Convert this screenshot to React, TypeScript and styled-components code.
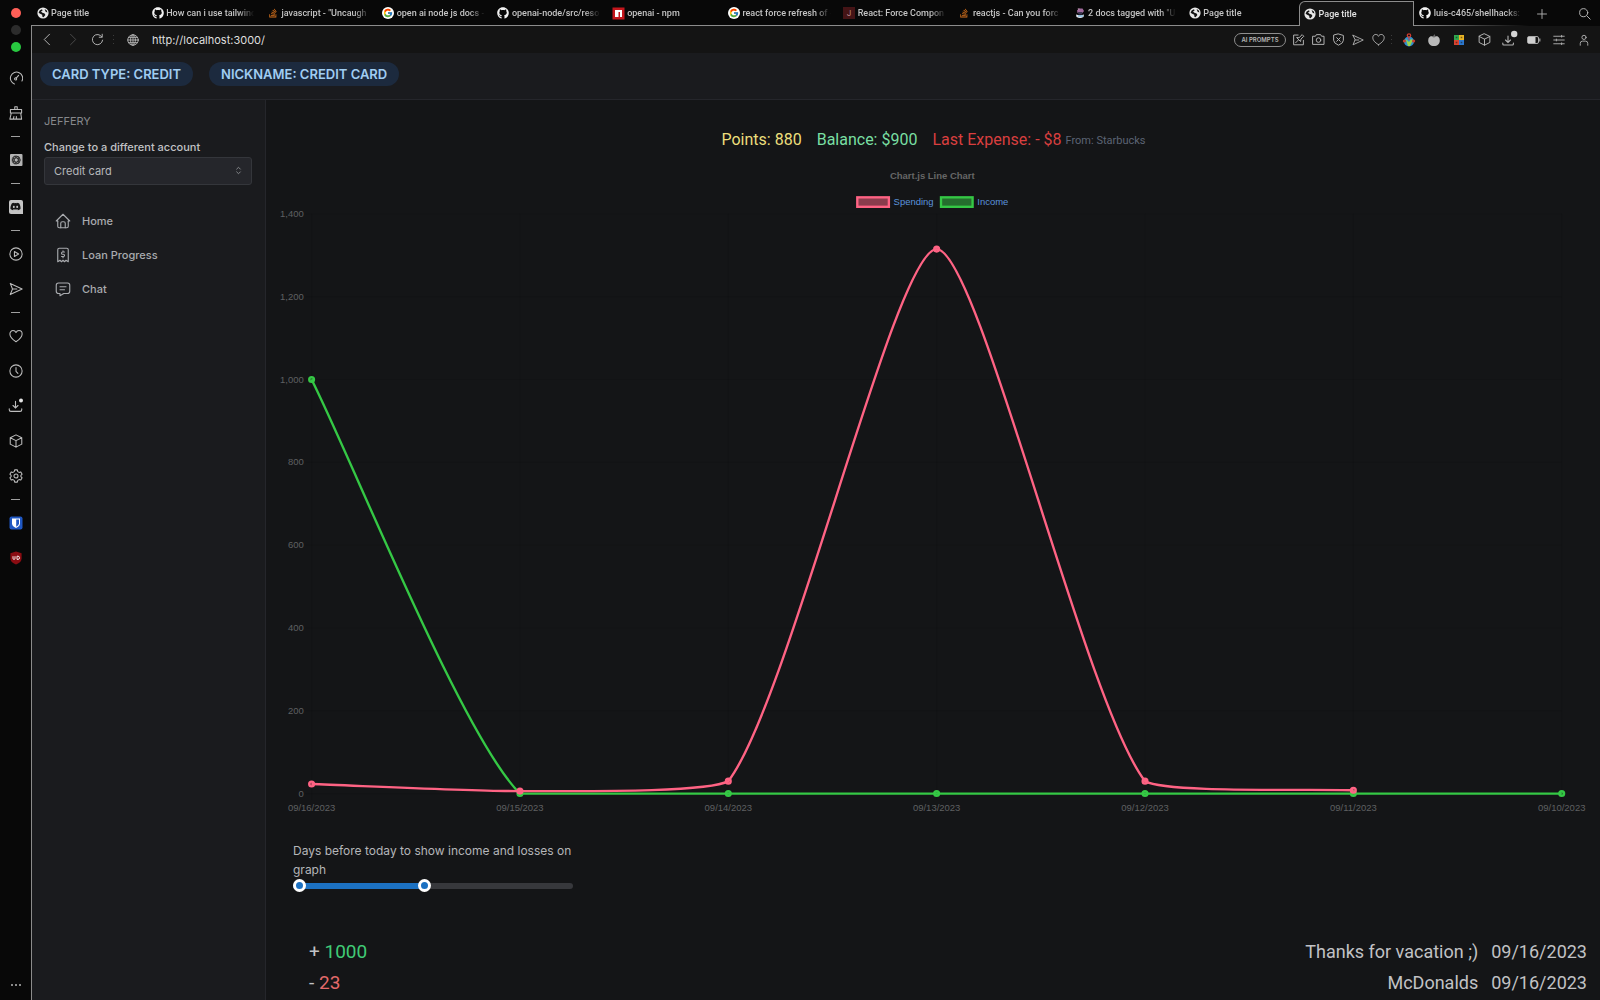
import React, { useState } from "react";
import styled, { createGlobalStyle, css } from "styled-components";
import { FaGithub, FaStackOverflow, FaDiscord } from "react-icons/fa";
import { FcGoogle } from "react-icons/fc";
import { TbHome, TbReceipt2, TbMessage, TbSelector } from "react-icons/tb";

const ui = `Inter, "Liberation Sans", sans-serif`;
const display = `Roboto, "Liberation Sans", sans-serif`;
const frameLine = "#8c8c8c";

const GlobalStyle = createGlobalStyle`
  * { box-sizing: border-box; }
  body { margin: 0; background: #141517; font-family: ${ui}; color: #c1c2c5; }
  button, input, select { font-family: inherit; margin: 0; }
  button { background: none; border: 0; padding: 0; color: inherit; cursor: pointer; }
  svg { display: block; }
`;

/* ---------- browser frame ---------- */

const Browser = styled.div`
  display: grid;
  grid-template-columns: 31px minmax(0, 1fr);
  height: 100vh;
  overflow: hidden;
  background: #080808;
`;

const Rail = styled.aside`
  display: flex;
  flex-direction: column;
  align-items: center;
  padding: 8px 0;
`;

const Lights = styled.div`
  display: flex;
  flex-direction: column;
  gap: 7px;
  margin-bottom: 8px;
`;

const Light = styled.button<{ $color: string }>`
  width: 10px;
  height: 10px;
  border-radius: 50%;
  background: ${(p) => p.$color};
`;

const RailButton = styled.button`
  display: grid;
  place-items: center;
  flex: none;
  width: 30px;
  height: 35px;
  color: #bdbdbd;
`;

const RailDash = styled.hr`
  flex: none;
  width: 9px;
  height: 1px;
  margin: 6px 0 5px;
  border: 0;
  background: #a0a0a0;
`;

const RailFoot = styled.div`
  margin-top: auto;
`;

const Frame = styled.div`
  display: flex;
  flex-direction: column;
  min-width: 0;
  min-height: 0;
`;

const TabBar = styled.div`
  display: flex;
  height: 26px;
  flex: none;
`;

const Tabs = styled.div`
  display: flex;
  flex: 1;
  min-width: 0;
`;

const Tab = styled.button<{ $state: "idle" | "active" | "last" }>`
  display: flex;
  align-items: center;
  gap: 2px;
  flex: 1 1 0;
  min-width: 0;
  padding: 0 5px;
  color: #c4c4c4;
  ${(p) =>
    p.$state === "idle" &&
    css`
      border-bottom: 1px solid ${frameLine};
      padding-top: 1px;
    `}
  ${(p) =>
    p.$state === "last" &&
    css`
      background: linear-gradient(90deg, ${frameLine}, #080808) bottom / 100% 1px no-repeat;
    `}
  ${(p) =>
    p.$state === "active" &&
    css`
      margin-top: 1px;
      background: #141414;
      border: 1px solid ${frameLine};
      border-bottom: 0;
      border-top-left-radius: 6px;
      padding: 0 4px;
      color: #e4e4e4;
    `}
`;

const TabIcon = styled.span`
  display: grid;
  place-items: center;
  flex: none;
  width: 13px;
  height: 13px;
`;

const TabText = styled.span`
  flex: 1;
  min-width: 0;
  overflow: hidden;
  white-space: nowrap;
  text-align: left;
  font-family: ${display};
  font-size: 9px;
  line-height: 14px;
  font-weight: 500;
  mask-image: linear-gradient(90deg, #000 80%, transparent 98%);
`;

const TabTools = styled.div`
  display: flex;
  align-items: center;
  justify-content: space-between;
  width: 71px;
  padding: 1px 9px 0 6px;
  color: #a8a8a8;
`;

const Page = styled.div`
  display: flex;
  flex-direction: column;
  flex: 1;
  min-height: 0;
  border-left: 1px solid ${frameLine};
  background: #141517;
`;

const AddressBar = styled.div`
  display: flex;
  align-items: center;
  flex: none;
  height: 27px;
  padding: 0 9px 0 8px;
  background: #141414;
  color: #b4b4b4;
`;

const NavButtons = styled.div`
  display: flex;
  align-items: center;
  gap: 11px;
`;

const IconButton = styled.button<{ $dim?: boolean }>`
  display: grid;
  place-items: center;
  width: 14px;
  height: 14px;
  color: ${(p) => (p.$dim ? "#4a4a4a" : "#b4b4b4")};
`;

const Grip = styled.span`
  width: 1px;
  height: 9px;
  background: repeating-linear-gradient(#3c3c3c 0 1px, transparent 1px 4px);
`;

const AddressGrip = styled(Grip)`
  margin: 0 13px 0 9px;
`;

const Address = styled.input`
  flex: 1;
  min-width: 0;
  margin-left: 13px;
  padding: 0;
  border: 0;
  outline: 0;
  background: none;
  color: #dedede;
  font-size: 11px;
  line-height: 16px;
`;

const Prompts = styled.button`
  height: 14px;
  width: 52px;
  margin-right: 5px;
  border: 1px solid #8e8e8e;
  border-radius: 7px;
  font-size: 6px;
  line-height: 12px;
  font-weight: 600;
`;

const PageTools = styled.div`
  display: flex;
  align-items: center;
  gap: 6px;
`;

const Extensions = styled.div`
  display: flex;
  align-items: center;
  gap: 11px;
  margin-left: 10px;
`;

/* ---------- app ---------- */

const AppHeader = styled.header`
  display: flex;
  gap: 16px;
  flex: none;
  height: 47px;
  padding: 9px 8px;
  background: #1a1b1e;
  border-bottom: 1px solid #25262b;
`;

const Badge = styled.span`
  height: 24px;
  padding: 0 12px;
  border-radius: 12px;
  background: #1c2a3e;
  color: #a0cdf2;
  font-size: 13px;
  line-height: 24px;
  font-weight: 600;
  text-transform: uppercase;
  white-space: nowrap;
`;

const Body = styled.div`
  display: flex;
  flex: 1;
  min-height: 0;
`;

const Sidebar = styled.nav`
  flex: none;
  width: 234px;
  padding: 12px 12px;
  background: #1a1b1e;
  border-right: 1px solid #25262b;
`;

const UserName = styled.p`
  margin: 0;
  color: #86888c;
  font-size: 11px;
  line-height: 18px;
`;

const FieldLabel = styled.label`
  display: block;
  margin-top: 8px;
  color: #c1c2c5;
  font-size: 11px;
  line-height: 18px;
  font-weight: 500;
`;

const SelectWrap = styled.div`
  position: relative;
  width: 208px;
  margin-top: 1px;
`;

const Select = styled.select`
  display: block;
  width: 100%;
  height: 28px;
  padding: 0 9px;
  appearance: none;
  border: 1px solid #34363b;
  border-radius: 3px;
  background: #25262b;
  color: #b6b7ba;
  font-size: 11px;
`;

const SelectIcon = styled.span`
  position: absolute;
  top: 8px;
  right: 8px;
  color: #8b8d91;
  pointer-events: none;
`;

const NavList = styled.ul`
  list-style: none;
  margin: 19px 0 0;
  padding: 0;
`;

const NavLink = styled.a`
  display: flex;
  align-items: center;
  gap: 10px;
  height: 34px;
  padding: 0 10px;
  color: #a9abaf;
  font-size: 11px;
  font-weight: 500;
  text-decoration: none;
`;

const Main = styled.main`
  flex: 1;
  min-width: 0;
  padding: 30px 13px 0 14px;
  overflow: hidden;
  background: #141517;
`;

const Stats = styled.div`
  display: flex;
  justify-content: center;
  align-items: center;
  gap: 15px;
  height: 20px;
  font-family: ${display};
`;

const Stat = styled.span<{ $color: string }>`
  color: ${(p) => p.$color};
  font-size: 16px;
  line-height: 20px;
  white-space: nowrap;
`;

const Source = styled.small`
  color: #5c6474;
  font-size: 11px;
  margin-left: 4px;
  vertical-align: 1px;
`;

const ChartBox = styled.figure`
  margin: 11px 0 0;

  svg {
    width: 100%;
    height: auto;
  }
  text {
    font-family: "Liberation Sans", sans-serif;
    font-size: 12px;
    fill: #5f6062;
  }
  text.title {
    font-weight: 700;
    fill: #666666;
  }
  text.legend {
    fill: #5b93dc;
  }
`;

const RangeField = styled.fieldset`
  width: 280px;
  margin: 26px 0 0 13px;
  padding: 0;
  border: 0;
`;

const RangeLegend = styled.legend`
  padding: 0;
  color: #b5b6b9;
  font-size: 12px;
  line-height: 19px;
`;

const RangeTrack = styled.div`
  position: relative;
  height: 13px;
  padding: 4px 0 3px;
`;

const RangeRail = styled.div`
  height: 6px;
  border-radius: 3px;
  background: #37383c;
`;

const RangeFill = styled.div`
  position: absolute;
  top: 4px;
  height: 6px;
  border-radius: 3px;
  background: #1c71c2;
`;

const RangeInput = styled.input`
  position: absolute;
  inset: 0;
  width: 100%;
  height: 13px;
  margin: 0;
  appearance: none;
  background: none;
  pointer-events: none;

  &::-webkit-slider-thumb {
    appearance: none;
    width: 13px;
    height: 13px;
    border: 3px solid #fff;
    border-radius: 50%;
    background: #1c71c2;
    pointer-events: auto;
  }
`;

const Transactions = styled.ul`
  list-style: none;
  margin: 44px 0 0;
  padding: 0 0 0 29px;
`;

const Transaction = styled.li`
  display: flex;
  gap: 13px;
  font-family: ${display};
  font-size: 18px;
  line-height: 31px;
  white-space: nowrap;
`;

const Amount = styled.span<{ $color: string }>`
  color: ${(p) => p.$color};
`;

const Signed = styled.span`
  flex: 1;
  font-size: 19px;
`;

/* ---------- icons ---------- */

type IconProps = { size?: number; children?: React.ReactNode; stroke?: number };

const Line = ({ size = 14, stroke = 1.2, children }: IconProps) => (
  <svg width={size} height={size} viewBox="0 0 16 16" fill="none" stroke="currentColor" strokeWidth={stroke} strokeLinejoin="round" strokeLinecap="round">
    {children}
  </svg>
);

const Gauge = () => (
  <Line>
    <path d="M6.200 14.800A7 7 0 1 1 14.800 11.500M8.200 8.200 11 5" />
    <circle cx="7.600" cy="9" r="1.200" />
  </Line>
);
const Cleaner = () => (
  <Line>
    <path d="M6.600 4V.8h2.800V4M1.600 4h12.800v4H1.600zM2.600 8 1 15h13.400L13.400 8M5 15l.6-3M8.400 15v-3" />
  </Line>
);
const Plane = ({ size }: IconProps) => (
  <Line size={size}>
    <path d="M1.400 1.600 15 8 1.400 14.400 4 8zM4 8h5" />
  </Line>
);
const Heart = ({ size }: IconProps) => (
  <Line size={size}>
    <path d="M8 14.500C3.500 11.600 1 9 1 5.700 1 3.400 2.600 1.800 4.600 1.800 6.200 1.800 7.400 2.700 8 4.100 8.600 2.700 9.800 1.800 11.400 1.800 13.400 1.800 15 3.400 15 5.700 15 9 12.500 11.600 8 14.500z" />
  </Line>
);
const Clock = () => (
  <Line>
    <circle cx="8" cy="8" r="7" />
    <path d="M8 4v4.400l2.200 2.400" />
  </Line>
);
const Play = () => (
  <Line>
    <circle cx="8" cy="8" r="7" />
    <path d="M6.200 5.200 11 8l-4.800 2.800z" />
  </Line>
);
const Download = ({ size = 15 }: IconProps) => (
  <svg width={size} height={size} viewBox="0 0 18 18" fill="none" stroke="currentColor" strokeWidth="1.300" strokeLinecap="round">
    <path d="M9 4v8M6 9l3 3 3-3M1.500 13v1q0 2 2 2h11q2 0 2-2v-1" />
    <circle cx="15.600" cy="3" r="2.400" fill="#e4e4e4" stroke="none" />
  </svg>
);
const DownloadDone = () => (
  <svg width="14" height="14" viewBox="0 0 14 14" fill="none" stroke="currentColor" strokeWidth="1.100" strokeLinecap="round" overflow="visible">
    <path d="M6 3v6.500M3.500 7 6 9.500 8.500 7M.8 10v1q0 1 1 1h8.600q1 0 1-1v-1" />
    <circle cx="12.200" cy="1" r="3.200" fill="#d4d4d4" stroke="none" />
  </svg>
);
const Cube = ({ size }: IconProps) => (
  <Line size={size}>
    <path d="M8 1 14.600 4.200v7.400L8 15 1.400 11.600V4.200zM1.400 4.200 8 7.600l6.600-3.400M8 7.600V15" />
  </Line>
);
const Gear = () => (
  <Line>
    <path d="M6.500 1h3l.5 2 1.500.9 2-.6L15 5.900 13.600 7.300v1.400L15 10.100l-1.500 2.600-2-.6-1.500.9-.5 2h-3L6 13l-1.500-.9-2 .6L1 10.100l1.400-1.400V7.300L1 5.900l1.500-2.600 2 .6L6 3z" />
    <circle cx="8" cy="8" r="2.300" />
  </Line>
);
const ChatGpt = () => (
  <svg width="14" height="14" viewBox="0 0 14 14">
    <rect x="1" y="1" width="12.500" height="12" rx="1" fill="#b4b4b4" />
    <g fill="none" stroke="#2a2a2a" strokeWidth="0.800">
      <circle cx="7.200" cy="7" r="4" />
      <ellipse cx="7.200" cy="7" rx="4" ry="2" />
      <ellipse cx="7.200" cy="7" rx="4" ry="2" transform="rotate(60 7.200 7)" />
      <ellipse cx="7.200" cy="7" rx="4" ry="2" transform="rotate(120 7.200 7)" />
    </g>
  </svg>
);
const DiscordTile = styled.span`
  display: grid;
  place-items: center;
  width: 14px;
  height: 14px;
  border-radius: 2px 2px 0 2px;
  background: #c4c4c4;
  color: #141414;
`;
const Bitwarden = () => (
  <svg width="14" height="14" viewBox="0 0 14 14">
    <rect x=".5" y=".5" width="13" height="13" rx="2" fill="#1f57c2" />
    <path d="M3 2.500h8v5q0 2.500-4 4.500-4-2-4-4.500z" fill="#fff" />
    <path d="M7.200 3.500h2.800v4q0 1.800-2.800 3.200z" fill="#1f57c2" />
  </svg>
);
const UBlock = () => (
  <svg width="14" height="14" viewBox="0 0 14 14">
    <path d="M7 .5 12.600 2.300v5.200q0 3.800-5.600 6-5.600-2.200-5.600-6V2.300z" fill="#8a0c12" />
    <path d="M4 5.200v2.200q0 1 1 1t1-1V5.200M8 5.200h1q1.500 0 1.500 1.600T9 8.400H8z" fill="none" stroke="#fff" strokeWidth=".900" />
  </svg>
);
const Globe = () => (
  <Line size={12}>
    <circle cx="8" cy="8" r="7" />
    <ellipse cx="8" cy="8" rx="3.200" ry="7" />
    <path d="M1 8h14M2 4.500h12M2 11.500h12M8 1v14" />
  </Line>
);
const PageIcon = () => (
  <svg width="12" height="12" viewBox="0 0 12 12">
    <circle cx="6" cy="6" r="5.600" fill="#e8e8e8" />
    <path d="M1.600 5.800Q2 3 5 2.200L5.600 3.600 4 4.600 5.400 5.800 7.600 6.400 8.400 8 6.600 10.200 5.400 9.800 5.200 7.800 3.200 6.800z" fill="#141414" />
    <path d="M7.600 2 9.800 3.400 10.400 5.400 8.600 4.800z" fill="#141414" />
  </svg>
);
const Docusaurus = () => (
  <svg width="12" height="12" viewBox="0 0 12 12">
    <path d="M3 3.500 5 1.500h3.500L10 4 8.500 6H3.500z" fill="#a06a9c" />
    <path d="M3.500 1.500h2L5 3z" fill="#d9a8c8" />
    <path d="M4 5h4.500L8 7.500H4.500z" fill="#3d3550" />
    <path d="M2 7.500q4 1.500 8 0L9.500 10q-3.500 2-7 0z" fill="#e6eaf2" />
    <path d="M4 9h5" stroke="#58a6d8" />
  </svg>
);
const JTile = styled.span`
  width: 12px;
  height: 12px;
  background: #451416;
  color: #b98686;
  font-size: 8px;
  line-height: 12px;
  text-align: center;
`;
const NpmTile = () => (
  <svg width="13" height="13" viewBox="0 0 13 13">
    <rect x=".5" y=".5" width="12" height="12" fill="#c4161c" />
    <path d="M3 3h7v7H8V5H6.500v5H3z" fill="#fff" />
  </svg>
);
const Disc = styled.span`
  display: grid;
  place-items: center;
  width: 12px;
  height: 12px;
  border-radius: 50%;
  background: #fff;
  color: #0b0b0b;
`;
const Github = () => <FaGithub size={12} color="#f2f2f2" />;
const Google = () => (
  <Disc>
    <FcGoogle size={10} />
  </Disc>
);
const Overflow = () => <FaStackOverflow size={10} color="#d9731c" />;

const ColorMap = () => (
  <svg width="14" height="14" viewBox="0 0 14 14">
    <circle cx="7" cy="8.500" r="5" fill="#2f8fd0" />
    <path d="M3.500 5.500 7 9l2-3 2 1-3 6H6z" fill="#9bd14a" />
    <circle cx="2.400" cy="8" r="1.600" fill="#c8402e" />
    <circle cx="11.600" cy="8" r="1.600" fill="#c8402e" />
    <circle cx="7" cy="2.500" r="1.700" fill="none" stroke="#d23a2c" strokeWidth="1.200" />
    <path d="M7 4v3" stroke="#d23a2c" />
  </svg>
);
const Tomato = () => (
  <svg width="14" height="14" viewBox="0 0 14 14">
    <path d="M7 3.500C10 2.300 12.800 4 12.800 7.500S10.500 13 7 13 1.200 11 1.200 7.500 4 2.300 7 3.500z" fill="#b9b9b9" />
    <path d="M4 3.500 7 4.500l3-1.200L8 2.800 7.500 1 6.500 2.700z" fill="#6c6c6c" />
  </svg>
);
const Squares = () => (
  <svg width="14" height="14" viewBox="0 0 14 14">
    <path d="M2 2h5v5H2z" fill="#2fa84f" />
    <path d="M7 2h5v5H7z" fill="#e8b324" />
    <path d="M2 7h5v5H2z" fill="#d8432f" />
    <path d="M7 7h5v5H7z" fill="#2c78d0" />
    <path d="M3.700 3.700h1.600v1.600H3.700zM8.700 3.700h1.600v1.600H8.700zM3.700 8.700h1.600v1.600H3.700zM8.700 8.700h1.600v1.600H8.700z" fill="#141414" opacity=".55" />
  </svg>
);
const Battery = () => (
  <svg width="14" height="14" viewBox="0 0 14 14">
    <rect x=".5" y="3.500" width="11" height="7" rx="1.500" fill="none" stroke="#a8a8a8" />
    <rect x="1" y="4" width="7.500" height="6" fill="#d0d0d0" />
    <path d="M12.800 5.500v3" stroke="#a8a8a8" strokeWidth="1.200" />
  </svg>
);
const Sliders = () => (
  <Line size={12}>
    <path d="M1 3h14M1 8h14M1 13h14M11.500 1.800v2.400M4.500 6.800v2.400M11.500 11.800v2.400" />
  </Line>
);
const Person = () => (
  <Line size={12}>
    <circle cx="8" cy="4.500" r="2.800" />
    <path d="M3 15V12.500q0-3 3-3h4q3 0 3 3V15" />
  </Line>
);
const Note = () => (
  <Line size={13}>
    <path d="M7.500 2.500H2v12h12V9M4.500 12 7.500 9M6 6l4.500 4.500.5-3L14.500 4 12.500 2 9 5.500z" />
  </Line>
);
const Camera = () => (
  <Line size={13}>
    <path d="M1.200 4h3l1.200-2h5.200l1.200 2h3v10H1.200z" />
    <circle cx="8" cy="8.700" r="2.800" />
  </Line>
);
const Shield = () => (
  <Line size={13}>
    <path d="M8 1.200 14 3v6q0 3.500-6 6-6-2.500-6-6V3zM5.800 5.800l4.400 4.400M10.200 5.800 5.800 10.200" />
  </Line>
);

/* ---------- data ---------- */

const tabs: { title: string; icon: React.ReactNode }[] = [
  { title: "Page title", icon: <PageIcon /> },
  { title: "How can i use tailwind", icon: <Github /> },
  { title: "javascript - \"Uncaugh", icon: <Overflow /> },
  { title: "open ai node js docs -", icon: <Google /> },
  { title: "openai-node/src/reso", icon: <Github /> },
  { title: "openai - npm", icon: <NpmTile /> },
  { title: "react force refresh of -", icon: <Google /> },
  { title: "React: Force Compon", icon: <JTile>J</JTile> },
  { title: "reactjs - Can you forc", icon: <Overflow /> },
  { title: "2 docs tagged with \"U", icon: <Docusaurus /> },
  { title: "Page title", icon: <PageIcon /> },
  { title: "Page title", icon: <PageIcon /> },
  { title: "luis-c465/shellhacks:", icon: <Github /> },
];
const activeTab = 11;

const days = ["09/16/2023", "09/15/2023", "09/14/2023", "09/13/2023", "09/12/2023", "09/11/2023", "09/10/2023"];
const spending = [23, 6, 30, 1315, 30, 8];
const income = [1000, 0, 0, 0, 0, 0, 0];
const ticks = [0, 200, 400, 600, 800, 1000, 1200, 1400];

const transactions = [
  { sign: "+", amount: "1000", color: "#40cb76", note: "Thanks for vacation ;)", date: "09/16/2023" },
  { sign: "-", amount: "23", color: "#e36a6a", note: "McDonalds", date: "09/16/2023" },
];

/* ---------- chart ---------- */

const plot = { left: 40, right: 1623, top: 67, bottom: 801 };
const px = (i: number) => plot.left + (i * (plot.right - plot.left)) / (days.length - 1);
const py = (v: number) => plot.bottom - (v * (plot.bottom - plot.top)) / 1400;
const clampY = (y: number) => Math.min(plot.bottom, Math.max(plot.top, y));

type Pt = { x: number; y: number };

function smoothPath(values: number[], tension = 0.2) {
  const pts: Pt[] = values.map((v, i) => ({ x: px(i), y: py(v) }));
  const controls = pts.map((p, i) => {
    const a = pts[i - 1] ?? p;
    const b = pts[i + 1] ?? p;
    const before = Math.hypot(p.x - a.x, p.y - a.y);
    const after = Math.hypot(b.x - p.x, b.y - p.y);
    const fa = (tension * before) / (before + after);
    const fb = (tension * after) / (before + after);
    return {
      prev: { x: p.x - fa * (b.x - a.x), y: clampY(p.y - fa * (b.y - a.y)) },
      next: { x: p.x + fb * (b.x - a.x), y: clampY(p.y + fb * (b.y - a.y)) },
    };
  });
  return pts
    .map((p, i) =>
      i === 0
        ? `M${p.x} ${p.y}`
        : `C${controls[i - 1].next.x} ${controls[i - 1].next.y} ${controls[i].prev.x} ${controls[i].prev.y} ${p.x} ${p.y}`
    )
    .join("");
}

const Series = ({ values, color, fill }: { values: number[]; color: string; fill: string }) => (
  <g>
    <path d={smoothPath(values)} fill="none" stroke={color} strokeWidth="3" />
    {values.map((v, i) => (
      <circle key={i} cx={px(i)} cy={py(v)} r="3" fill={fill} stroke={color} strokeWidth="3" />
    ))}
  </g>
);

const pink = "rgb(255, 99, 132)";
const pinkFill = "rgba(255, 99, 132, 0.5)";
const green = "rgb(53, 200, 69)";
const greenFill = "rgba(53, 200, 69, 0.5)";

const LineChart = () => (
  <ChartBox>
    <svg viewBox="0 0 1655 828" role="img" aria-label="Chart.js Line Chart">
      <text className="title" x="826" y="23" textAnchor="middle">Chart.js Line Chart</text>
      <rect x="731" y="46" width="40" height="12" fill={pinkFill} stroke={pink} strokeWidth="3" />
      <text className="legend" x="777" y="56">Spending</text>
      <rect x="837" y="46" width="40" height="12" fill={greenFill} stroke={green} strokeWidth="3" />
      <text className="legend" x="883" y="56">Income</text>
      {ticks.map((t) => (
        <g key={t}>
          <path d={`M${plot.left - 8} ${py(t)}H${plot.right}`} stroke="#000" strokeOpacity="0.1" />
          <text x={plot.left - 10} y={py(t) + 4} textAnchor="end">{t.toLocaleString("en-US")}</text>
        </g>
      ))}
      {days.map((d, i) => (
        <g key={d}>
          <path d={`M${px(i)} ${plot.top}V${plot.bottom + 8}`} stroke="#000" strokeOpacity="0.1" />
          <text x={px(i)} y="823" textAnchor="middle">{d}</text>
        </g>
      ))}
      <Series values={income} color={green} fill={greenFill} />
      <Series values={spending} color={pink} fill={pinkFill} />
    </svg>
  </ChartBox>
);

const DaysRange = () => {
  const max = 15;
  const [from, setFrom] = useState(0);
  const [to, setTo] = useState(7);
  return (
    <RangeField>
      <RangeLegend>Days before today to show income and losses on graph</RangeLegend>
      <RangeTrack>
        <RangeRail />
        <RangeFill style={{ left: `${(from / max) * 100}%`, width: `${((to - from) / max) * 100}%` }} />
        <RangeInput type="range" aria-label="From day" min={0} max={max} value={from} onChange={(e) => setFrom(Math.min(+e.target.value, to))} />
        <RangeInput type="range" aria-label="To day" min={0} max={max} value={to} onChange={(e) => setTo(Math.max(+e.target.value, from))} />
      </RangeTrack>
    </RangeField>
  );
};

export default function App() {
  return (
    <Browser>
      <GlobalStyle />
      <Rail>
        <Lights>
          <Light $color="#ff5f57" aria-label="Close" />
          <Light $color="#2c2c2c" aria-label="Minimize" />
          <Light $color="#28c840" aria-label="Zoom" />
        </Lights>
        <RailButton aria-label="Speed"><Gauge /></RailButton>
        <RailButton aria-label="Cleaner"><Cleaner /></RailButton>
        <RailDash />
        <RailButton aria-label="ChatGPT"><ChatGpt /></RailButton>
        <RailDash />
        <RailButton aria-label="Discord"><DiscordTile><FaDiscord size={11} /></DiscordTile></RailButton>
        <RailDash />
        <RailButton aria-label="Player"><Play /></RailButton>
        <RailButton aria-label="Flow"><Plane /></RailButton>
        <RailDash />
        <RailButton aria-label="Favourites"><Heart /></RailButton>
        <RailButton aria-label="History"><Clock /></RailButton>
        <RailButton aria-label="Downloads"><Download /></RailButton>
        <RailButton aria-label="Extensions"><Cube /></RailButton>
        <RailButton aria-label="Settings"><Gear /></RailButton>
        <RailDash />
        <RailButton aria-label="Bitwarden"><Bitwarden /></RailButton>
        <RailButton aria-label="uBlock"><UBlock /></RailButton>
        <RailFoot>
          <IconButton aria-label="More">
            <svg width="12" height="4" viewBox="0 0 12 4" fill="currentColor">
              <circle cx="2" cy="2" r="1" />
              <circle cx="6" cy="2" r="1" />
              <circle cx="10" cy="2" r="1" />
            </svg>
          </IconButton>
        </RailFoot>
      </Rail>

      <Frame>
        <TabBar>
          <Tabs>
            {tabs.map((t, i) => (
              <Tab key={i} $state={i === activeTab ? "active" : i > activeTab ? "last" : "idle"}>
                <TabIcon>{t.icon}</TabIcon>
                <TabText>{t.title}</TabText>
              </Tab>
            ))}
          </Tabs>
          <TabTools>
            <IconButton aria-label="New tab"><Line size={12}><path d="M8 2v12M2 8h12" /></Line></IconButton>
            <IconButton aria-label="Search tabs"><Line size={13}><circle cx="7" cy="7" r="5" /><path d="m11 11 4 4" /></Line></IconButton>
          </TabTools>
        </TabBar>

        <Page>
          <AddressBar>
            <NavButtons>
              <IconButton aria-label="Back"><Line size={13}><path d="M10.500 1.500 4 8l6.500 6.500" /></Line></IconButton>
              <IconButton aria-label="Forward" $dim><Line size={13}><path d="M5.500 1.500 12 8l-6.500 6.500" /></Line></IconButton>
              <IconButton aria-label="Reload"><Line size={13}><path d="M13.400 4.800A6.300 6.300 0 1 0 14.300 8.800M13.800 1.500v3.700h-3.700" /></Line></IconButton>
            </NavButtons>
            <AddressGrip />
            <Globe />
            <Address aria-label="Address" defaultValue="http://localhost:3000/" />
            <Prompts>AI PROMPTS</Prompts>
            <PageTools>
              <IconButton aria-label="Note"><Note /></IconButton>
              <IconButton aria-label="Snapshot"><Camera /></IconButton>
              <IconButton aria-label="Blocker"><Shield /></IconButton>
              <IconButton aria-label="Send"><Plane size={12} /></IconButton>
              <IconButton aria-label="Favourite"><Heart size={13} /></IconButton>
              <Grip />
            </PageTools>
            <Extensions>
              <IconButton aria-label="Map"><ColorMap /></IconButton>
              <IconButton aria-label="Timer"><Tomato /></IconButton>
              <IconButton aria-label="Squares"><Squares /></IconButton>
              <IconButton aria-label="Extensions"><Cube size={13} /></IconButton>
              <IconButton aria-label="Downloads"><DownloadDone /></IconButton>
              <IconButton aria-label="Battery"><Battery /></IconButton>
              <IconButton aria-label="Easy setup"><Sliders /></IconButton>
              <IconButton aria-label="Profile"><Person /></IconButton>
            </Extensions>
          </AddressBar>

          <AppHeader>
            <Badge>Card type: Credit</Badge>
            <Badge>Nickname: Credit card</Badge>
          </AppHeader>

          <Body>
            <Sidebar>
              <UserName>JEFFERY</UserName>
              <FieldLabel htmlFor="account">Change to a different account</FieldLabel>
              <SelectWrap>
                <Select id="account" defaultValue="credit">
                  <option value="credit">Credit card</option>
                </Select>
                <SelectIcon><TbSelector size={11} /></SelectIcon>
              </SelectWrap>
              <NavList>
                <li><NavLink href="#home"><TbHome size={18} strokeWidth={1.5} />Home</NavLink></li>
                <li><NavLink href="#loans"><TbReceipt2 size={18} strokeWidth={1.5} />Loan Progress</NavLink></li>
                <li><NavLink href="#chat"><TbMessage size={18} strokeWidth={1.5} />Chat</NavLink></li>
              </NavList>
            </Sidebar>

            <Main>
              <Stats>
                <Stat $color="#ecdf7c">Points: 880</Stat>
                <Stat $color="#79dfa2">Balance: $900</Stat>
                <Stat $color="#d93f3f">
                  Last Expense: - $8<Source>From: Starbucks</Source>
                </Stat>
              </Stats>
              <LineChart />
              <DaysRange />
              <Transactions>
                {transactions.map((t) => (
                  <Transaction key={t.note}>
                    <Signed>
                      {t.sign} <Amount $color={t.color}>{t.amount}</Amount>
                    </Signed>
                    <span>{t.note}</span>
                    <time>{t.date}</time>
                  </Transaction>
                ))}
              </Transactions>
            </Main>
          </Body>
        </Page>
      </Frame>
    </Browser>
  );
}
